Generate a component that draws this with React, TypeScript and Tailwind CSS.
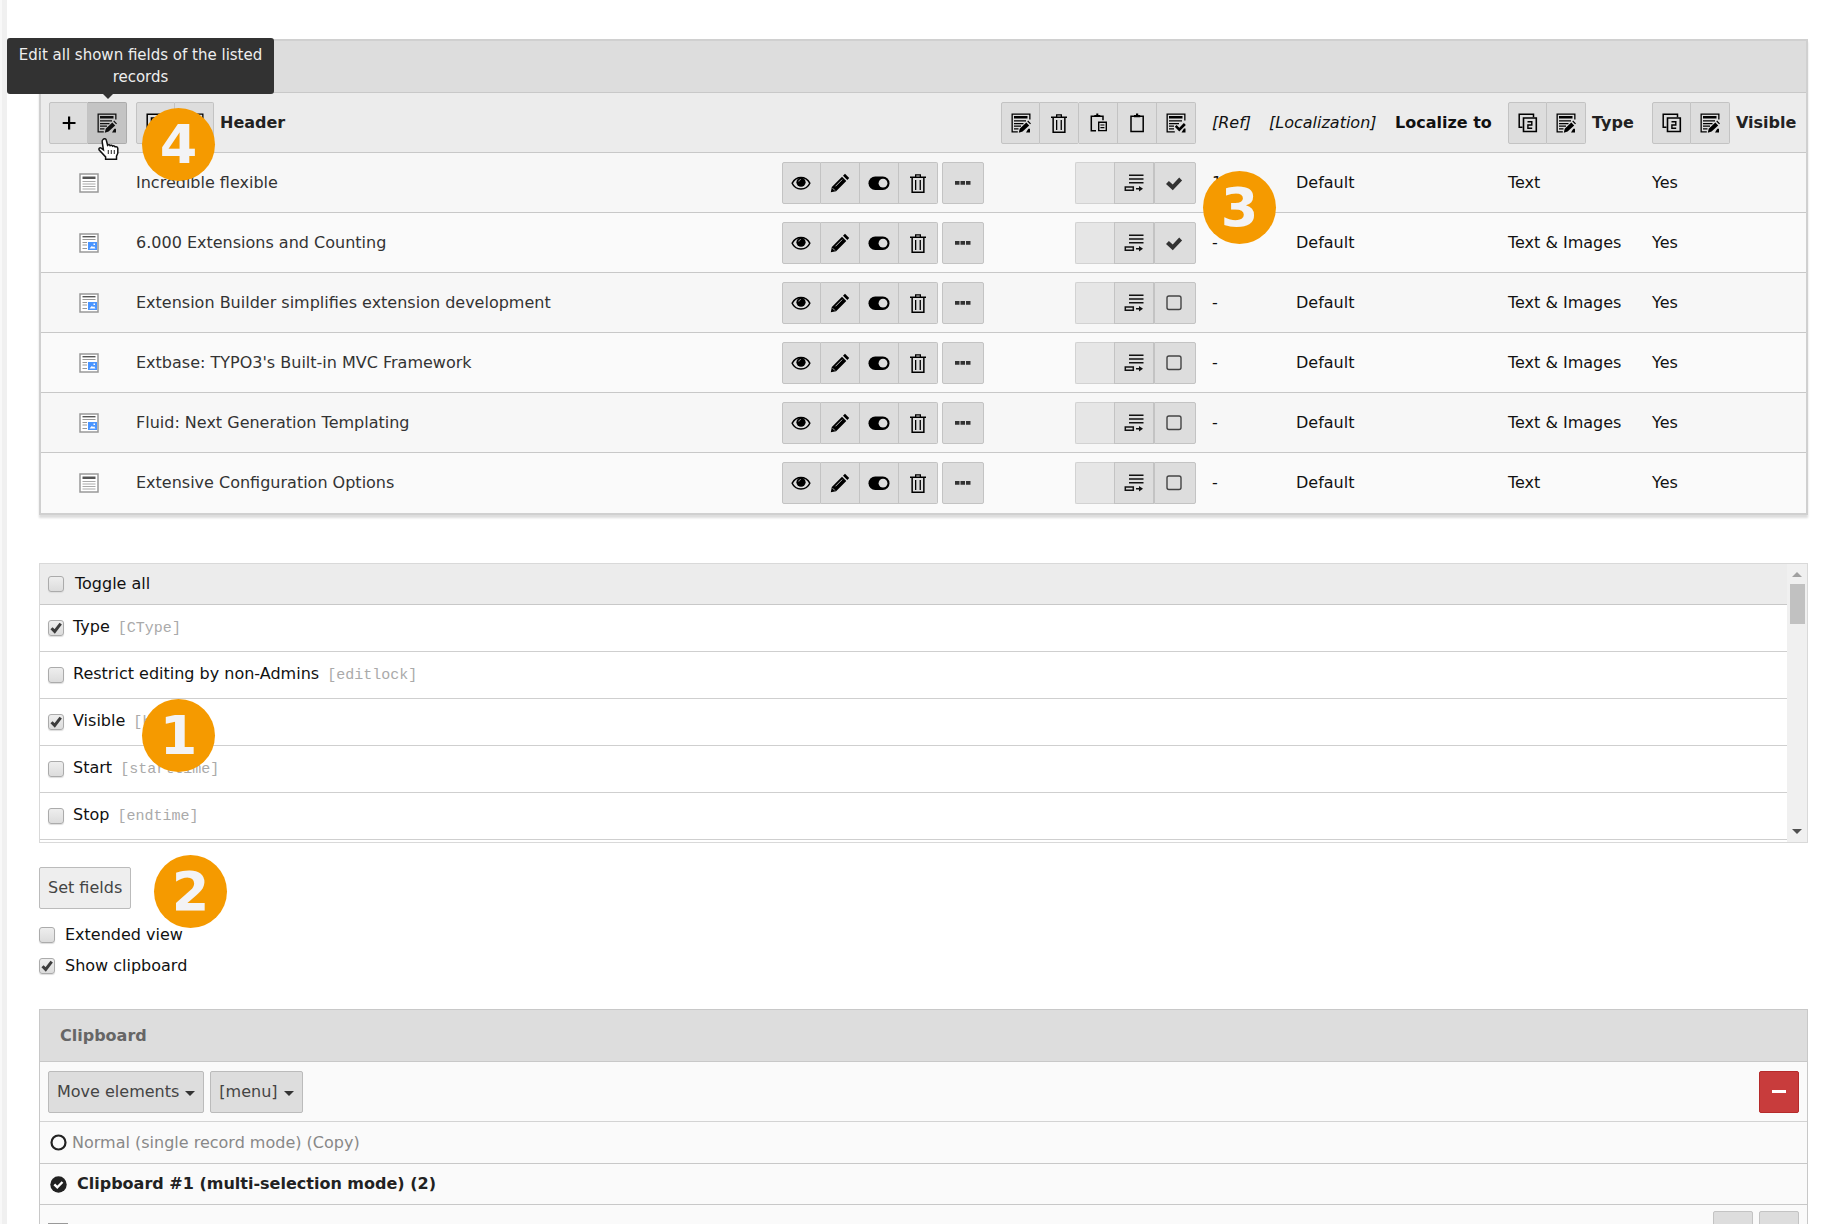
import React from 'react';

const records = [
  { title: 'Incredible flexible', type: 'Text', checked: true, ref: '1' },
  { title: '6.000 Extensions and Counting', type: 'Text & Images', checked: true, ref: '-' },
  { title: 'Extension Builder simplifies extension development', type: 'Text & Images', checked: false, ref: '-' },
  { title: "Extbase: TYPO3's Built-in MVC Framework", type: 'Text & Images', checked: false, ref: '-' },
  { title: 'Fluid: Next Generation Templating', type: 'Text & Images', checked: false, ref: '-' },
  { title: 'Extensive Configuration Options', type: 'Text', checked: false, ref: '-' },
];

const fields = [
  { label: 'Type', name: 'CType', checked: true },
  { label: 'Restrict editing by non-Admins', name: 'editlock', checked: false },
  { label: 'Visible', name: 'hidden', checked: true },
  { label: 'Start', name: 'starttime', checked: false },
  { label: 'Stop', name: 'endtime', checked: false },
];

function Icon({ children }: { children: React.ReactNode }) {
  return (
    <svg width="20" height="20" viewBox="0 0 20 20" fill="currentColor" aria-hidden="true">
      {children}
    </svg>
  );
}

const PlusIcon = () => (
  <Icon>
    <path d="M9 3.5h2.200v5.400h5.300v2.200h-5.300v5.400H9v-5.400H3.700V8.900H9z" />
  </Icon>
);

const EditListIcon = () => (
  <Icon>
    <path d="M.5.5h19v6h-1.300V1.800H1.800v16.400h5v1.300H.5z" />
    <path d="M3 3h13.500v2.500H3zM3 7.200h12v1.300H3zM3 9.900h9.500v1.300H3zM3 12.500h7v1.300H3zM3 15.200h4.500v1.300H3z" />
    <path d="M7.800 19.700l.9-4 6.600-6.200 2.900 2.900-6.600 6.200zM16.300 8.400l.8-.8 2.900 2.900-.9.800zM17.300 15.700h1.700v3.800h-4z" />
  </Icon>
);

const CheckListIcon = () => (
  <Icon>
    <path d="M.5.5h19v7h-1.300V1.800H1.800v16.400h7v1.300H.5z" />
    <path d="M3 3h13.500v2.500H3zM3 7.200h13v1.300H3zM3 9.900h10v1.300H3zM3 12.500h5v1.300H3zM3 15.200h5v1.300H3z" />
    <path d="M8.800 13.800l1.800-1.800 2.700 2.700 4.600-4.700 1.900 1.900-6.500 6.500zM18 15.500h1.500v4h-4z" />
  </Icon>
);

const TrashIcon = () => (
  <Icon>
    <path d="M2 3.500h5V1.200h6v2.300h5v1.600h-1.400V20H3.400V5.100H2zM8.300 3.500h3.400V2.400H8.300zM4.900 5.100v13.500h10.200V5.100z" fillRule="evenodd" />
    <path d="M7 7h1.300v10H7zM11.600 7h1.300v10h-1.300z" />
  </Icon>
);

const PasteIcon = () => (
  <Icon>
    <path d="M8 17.700H3.300V3.300H15v4" fill="none" stroke="currentColor" strokeWidth="1.500" />
    <path d="M6.300 3.800V2h2V.6h2V2h2v1.800zM10 8.500h9v9.800h-9zM11.400 9.900v7h6.200v-7z" fillRule="evenodd" />
    <path d="M12.400 11.400h4v1.200h-4zM12.400 14h4v1.200h-4z" />
  </Icon>
);

const ClipboardIcon = () => (
  <Icon>
    <path d="M4 3.300h12.200v15.200H4z" fill="none" stroke="currentColor" strokeWidth="1.500" />
    <path d="M7 4.200V2h2V.6h2.200V2h2v2.200z" />
  </Icon>
);

const CopyIcon = () => (
  <Icon>
    <path d="M4.500 14.200H1.200V1.200H15.500v3" fill="none" stroke="currentColor" strokeWidth="1.500" />
    <path d="M5.500 5h12.800v13.500H5.500z" fill="none" stroke="currentColor" strokeWidth="1.600" />
    <path d="M9.500 8.800h4.300v3.200H9.900v3.200h4.300" fill="none" stroke="currentColor" strokeWidth="1.400" />
  </Icon>
);

const EyeIcon = () => (
  <Icon>
    <path d="M1.200 10.200C3.400 6.200 6.500 4.600 10 4.600s6.600 1.600 8.800 5.600C17 14.300 13.700 15.900 10 15.900S3 14.300 1.200 10.200z" fill="none" stroke="currentColor" strokeWidth="1.500" />
    <circle cx="10" cy="9.200" r="4.600" />
    <path d="M7.800 8.500c.2-1.200.9-1.800 2-2" fill="none" stroke="#ddd" strokeWidth=".8" />
  </Icon>
);

const PencilIcon = () => (
  <Icon>
    <path d="M.8 19.300l1-5.300L12 3.800l4.300 4.300L6.100 18.300zM13 2.800L15 .8l4.200 4.300-1.900 2z" />
    <path d="M5.500 13.300l6.700-6.700M2.600 15.200l2.300 2.300" stroke="#ddd" strokeWidth=".8" />
  </Icon>
);

const ToggleIcon = () => (
  <svg width="22" height="20" viewBox="0 0 22 20" aria-hidden="true">
    <rect x=".5" y="3.500" width="21" height="13.500" rx="6.700" />
    <circle cx="15" cy="10.200" r="4.400" fill="#ddd" />
  </svg>
);

const DotsIcon = () => (
  <Icon>
    <path d="M2 8h4.500v3.700H2zM7.500 8H12v3.700H7.500zM13 8h4.500v3.700H13z" fill="#333" />
  </Icon>
);

const IndentIcon = () => (
  <Icon>
    <path d="M5 1.500h14.500V3H5zM5 5.300h14.500v1.500H5zM5 9.100h14.500v1.500H5z" />
    <path d="M1.300 14.100h8v3.100h-8z" fill="none" stroke="currentColor" strokeWidth="1.500" />
    <path d="M12 15h3v-2l4 2.700-4 2.700v-2h-3z" />
  </Icon>
);

const CheckIcon = () => (
  <Icon>
    <path d="M1 11l2.900-3 3.800 3.600 6.500-7 2.900 2.800-9.300 9.800z" fill="#333" />
  </Icon>
);

const EmptyBoxIcon = () => (
  <Icon>
    <rect x="2" y="3" width="14" height="13.500" rx="2" fill="none" stroke="#444" strokeWidth="1.400" />
  </Icon>
);

function TextRecordIcon() {
  return (
    <svg width="20" height="20" viewBox="0 0 20 20" aria-hidden="true">
      <rect x="1" y="1" width="18" height="18" fill="#fff" stroke="#999" strokeWidth="1.500" />
      <path d="M3.500 3.500h13v2.500h-13z" fill="#555" />
      <path d="M3.500 8.500h13M3.500 11h13M3.500 13.500h13M3.500 16h13" stroke="#aaa" />
    </svg>
  );
}

function ImageRecordIcon() {
  return (
    <svg width="20" height="20" viewBox="0 0 20 20" aria-hidden="true">
      <rect x="1" y="1" width="18" height="18" fill="#fff" stroke="#999" strokeWidth="1.500" />
      <path d="M3.500 3h13v1.400h-13z" fill="#555" />
      <path d="M3.500 6.500h13M3.500 9.500H8M3.500 12H8M3.500 15.500H8" stroke="#999" />
      <path d="M9 9h9v8H9z" fill="#4a95ff" />
      <path d="M10.500 15.500l2.300-2.500 1.300 1 1-.7 1.400 2.200z" fill="#fff" />
      <path d="M14.500 10.500h1.500v1.500h-1.500z" fill="#fff" />
    </svg>
  );
}

function IconButton({ label, className = '', children }: { label: string; className?: string; children?: React.ReactNode }) {
  return (
    <button
      type="button"
      aria-label={label}
      className={
        'flex h-[42px] w-[39px] items-center justify-center border border-l-0 border-[#c3c3c3] bg-[#ddd] text-black first:rounded-l-xs first:border-l last:rounded-r-xs ' +
        className
      }
    >
      {children}
    </button>
  );
}

function ColumnTools() {
  return (
    <div className="flex">
      <IconButton label="Copy column">
        <CopyIcon />
      </IconButton>
      <IconButton label="Edit column">
        <EditListIcon />
      </IconButton>
    </div>
  );
}

function Checkbox({ checked, id }: { checked?: boolean; id: string }) {
  return (
    <span className="relative inline-flex size-4 shrink-0">
      <input
        id={id}
        type="checkbox"
        defaultChecked={checked}
        className="peer size-4 appearance-none rounded-[3px] border border-[#ababab] bg-linear-to-b from-[#eee] to-[#dcdcdc] shadow-[0_1px_1px_#ddd]"
      />
      <svg viewBox="0 0 16 16" className="pointer-events-none absolute inset-0 hidden peer-checked:block" aria-hidden="true">
        <path d="M3.500 8.200l3.200 3.200 6-7.700" fill="none" stroke="#3c3c3c" strokeWidth="3" />
      </svg>
    </span>
  );
}

function Badge({ n, className }: { n: number; className: string }) {
  return (
    <div
      className={
        'pointer-events-none absolute z-10 flex size-[73px] items-center justify-center rounded-full bg-[#f59a00] text-[54px] leading-none font-bold text-[#f3f3f5] ' +
        className
      }
    >
      {n}
    </div>
  );
}

function HandCursor() {
  return (
    <svg width="23" height="24" viewBox="0 0 23 24" className="pointer-events-none absolute top-[35px] left-[9px] z-10" aria-hidden="true">
      <path
        d="M6 2.500c1.300-1.300 3-.8 3.400 1l1.200 4.800c.8-.8 2-.7 2.500.3.900-.7 2.100-.5 2.500.5.900-.5 2.100-.2 2.500.7 1.400-.5 2.600.2 2.700 1.700v4.700l-1.300 3v3H8.600v-2.300L2 12.800c-.6-1.500.9-2.600 2.200-1.700l2.200 1.700L5.200 5c-.2-.9 0-1.800.8-2.500z"
        fill="#fff"
        stroke="#111"
        strokeWidth="1.500"
      />
      <path d="M11.300 13v4M14.300 13v4M17.300 13v4" stroke="#333" strokeWidth="1.100" />
    </svg>
  );
}

function RecordTable() {
  return (
    <section className="relative border-2 border-[#d0d0d0] shadow-[0_3px_2px_#ddd]">
      <div className="h-[52px] border-b border-[#c8c8c8] bg-[#ddd]" />
      <table className="w-full table-fixed border-separate border-spacing-0 text-left [&_tr:not(:last-child)>td]:border-b [&_td]:border-[#c8c8c8]">
        <colgroup>
          <col className="w-[87px]" />
          <col />
          <col className="w-[218px]" />
          <col className="w-[212px]" />
          <col className="w-[57px]" />
          <col className="w-[126px]" />
          <col className="w-[113px]" />
          <col className="w-36" />
          <col className="w-[162px]" />
        </colgroup>
        <thead>
          <tr className="h-[60px] bg-[#ececec] whitespace-nowrap [&>th]:border-b [&>th]:border-[#c8c8c8]">
            <th className="p-0 pl-2">
              <div className="flex">
                <IconButton label="New record">
                  <PlusIcon />
                </IconButton>
                <div className="relative">
                  <button
                    type="button"
                    aria-label="Edit all shown fields"
                    aria-describedby="edit-tip"
                    className="flex h-[42px] w-[39px] items-center justify-center rounded-r-xs border border-l-0 border-[#acacac] bg-[#c4c4c4]"
                  >
                    <EditListIcon />
                  </button>
                  <div
                    id="edit-tip"
                    role="tooltip"
                    className="absolute -top-16 -left-[81px] z-20 w-[267px] rounded-[3px] bg-[#323232] px-2.5 py-1.5 text-center text-[15px] leading-[22px] font-normal whitespace-normal text-[#eee]"
                  >
                    Edit all shown fields of the listed records
                    <span className="absolute top-full left-[96px] border-x-[5px] border-t-[5px] border-x-transparent border-t-[#323232]" />
                  </div>
                  <HandCursor />
                </div>
              </div>
            </th>
            <th className="px-2 py-0" colSpan={2}>
              <div className="flex items-center gap-1.5">
                <ColumnTools />
                <a href="#header" className="text-[#222]">Header</a>
              </div>
            </th>
            <th className="p-0 pr-2">
              <div className="flex justify-end">
                <IconButton label="Edit marked">
                  <EditListIcon />
                </IconButton>
                <IconButton label="Delete marked" className="rounded-r-xs">
                  <TrashIcon />
                </IconButton>
                <IconButton label="Paste">
                  <PasteIcon />
                </IconButton>
                <IconButton label="Transfer to clipboard">
                  <ClipboardIcon />
                </IconButton>
                <IconButton label="Mark all">
                  <CheckListIcon />
                </IconButton>
              </div>
            </th>
            <th className="px-2 py-0 font-normal italic">[Ref]</th>
            <th className="px-2 py-0 font-normal italic">[Localization]</th>
            <th className="px-2 py-0">Localize to</th>
            <th className="px-2 py-0">
              <div className="flex items-center gap-1.5">
                <ColumnTools />
                <a href="#type" className="text-[#222]">Type</a>
              </div>
            </th>
            <th className="px-2 py-0">
              <div className="flex items-center gap-1.5">
                <ColumnTools />
                <a href="#visible" className="text-[#222]">Visible</a>
              </div>
            </th>
          </tr>
        </thead>
        <tbody>
          {records.map((r) => (
            <tr key={r.title} className="h-[60px] bg-[#fafafa] whitespace-nowrap odd:bg-[#f7f7f7]">
              <td className="p-0 pl-[38px]">{r.type === 'Text' ? <TextRecordIcon /> : <ImageRecordIcon />}</td>
              <td className="px-2 py-0">
                <a href="#record" className="text-[#333]">{r.title}</a>
              </td>
              <td className="px-2 py-0">
                <div className="flex gap-1">
                  <div className="flex">
                    <IconButton label="View"><EyeIcon /></IconButton>
                    <IconButton label="Edit"><PencilIcon /></IconButton>
                    <IconButton label="Hide"><ToggleIcon /></IconButton>
                    <IconButton label="Delete"><TrashIcon /></IconButton>
                  </div>
                  <button
                    type="button"
                    aria-label="More options"
                    className="flex h-[42px] w-[42px] items-center justify-center rounded-xs border border-[#c3c3c3] bg-[#ddd]"
                  >
                    <DotsIcon />
                  </button>
                </div>
              </td>
              <td className="p-0 pr-2">
                <div className="flex justify-end">
                  <span className="h-[42px] w-[39px] rounded-l-xs border border-r-0 border-[#d2d2d2] bg-[#e6e6e6]" />
                  <button
                    type="button"
                    aria-label="Indent"
                    className="flex h-[42px] w-10 items-center justify-center border border-[#c3c3c3] bg-[#ddd]"
                  >
                    <IndentIcon />
                  </button>
                  <button
                    type="button"
                    aria-label="Mark record"
                    aria-pressed={r.checked}
                    className="flex h-[42px] w-[42px] items-center justify-center rounded-r-xs border border-[#c3c3c3] bg-[#ddd]"
                  >
                    {r.checked ? <CheckIcon /> : <EmptyBoxIcon />}
                  </button>
                </div>
              </td>
              <td className="px-2 py-0">{r.ref}</td>
              <td className="p-0 pl-[35px]">Default</td>
              <td className="p-0" />
              <td className="px-2 py-0">{r.type}</td>
              <td className="px-2 py-0">Yes</td>
            </tr>
          ))}
        </tbody>
      </table>
      <Badge n={4} className="top-[67px] left-[101px]" />
      <Badge n={3} className="top-[130px] right-[530px]" />
    </section>
  );
}

function FieldList() {
  return (
    <section className="relative mt-12 flex h-[280px] border border-[#d9d9d9]">
      <div className="min-w-0 flex-1 overflow-hidden">
        <div className="flex h-[41px] items-center gap-[11px] border-b border-[#c8c8c8] bg-[#ececec] px-2">
          <Checkbox id="toggle-all" />
          <label htmlFor="toggle-all">Toggle all</label>
        </div>
        {fields.map((f) => (
          <div key={f.name} className="flex h-[47px] items-center border-b border-[#cfcfcf] px-2">
            <Checkbox id={f.name} checked={f.checked} />
            <label htmlFor={f.name} className="pl-[9px]">
              {f.label} <span className="pl-[3px] font-['Liberation_Mono',monospace] text-[15px] text-[#aaa]">[{f.name}]</span>
            </label>
          </div>
        ))}
      </div>
      <div className="flex w-5 flex-col items-center justify-between bg-[#f0f0f0] pt-2 pb-2" aria-hidden="true">
        <div className="flex flex-col items-center gap-[7px]">
          <span className="border-x-[5px] border-b-[5px] border-x-transparent border-b-[#a0a0a0]" />
          <span className="h-10 w-[15px] bg-[#c1c1c1]" />
        </div>
        <span className="border-x-[5px] border-t-[5px] border-x-transparent border-t-[#505050]" />
      </div>
      <Badge n={1} className="top-[135px] left-[102px]" />
    </section>
  );
}

function Caret() {
  return <span className="mt-1 border-x-[5px] border-t-[5px] border-x-transparent border-t-[#333]" />;
}

function ClipboardPanel() {
  return (
    <section className="mt-[33px] border border-[#c8c8c8] bg-[#fafafa]">
      <h2 className="flex h-[52px] items-center border-b border-[#c8c8c8] bg-[#ddd] px-5 font-bold text-[#666]">Clipboard</h2>
      <div className="flex h-[60px] items-center gap-1.5 border-b border-[#d3d3d3] px-2">
        <button type="button" className="flex h-[42px] items-center gap-1.5 rounded-xs border border-[#bbb] bg-[#ddd] px-2 text-[#444]">
          Move elements <Caret />
        </button>
        <button type="button" className="flex h-[42px] items-center gap-1.5 rounded-xs border border-[#bbb] bg-[#ddd] px-2 text-[#444]">
          [menu] <Caret />
        </button>
        <button
          type="button"
          aria-label="Clear"
          className="ml-auto flex h-[42px] w-10 items-center justify-center rounded-xs border border-[#b52a2a] bg-[#c83c3c]"
        >
          <span className="h-[3px] w-3.5 bg-white" />
        </button>
      </div>
      <div className="flex h-[42px] items-center gap-[5px] border-b border-[#c8c8c8] px-[10px] text-[#888]">
        <svg width="17" height="17" viewBox="0 0 17 17" aria-hidden="true">
          <circle cx="8.500" cy="8.500" r="7" fill="none" stroke="#222" strokeWidth="2.200" />
        </svg>
        <a href="#normal">Normal (single record mode) (Copy)</a>
      </div>
      <div className="flex h-[41px] items-center gap-[10px] border-b border-[#c8c8c8] px-[10px] text-[#222]">
        <svg width="17" height="17" viewBox="0 0 17 17" aria-hidden="true">
          <circle cx="8.500" cy="8.500" r="8.200" fill="#222" />
          <path d="M4.300 8.300l3 3 5.200-5.300" fill="none" stroke="#fff" strokeWidth="2.400" />
        </svg>
        <a href="#clipboard-1" className="font-bold">Clipboard #1 (multi-selection mode) (2)</a>
      </div>
      <div className="flex h-[60px] items-start gap-1.5 px-2 pt-1.5">
        <span className="mt-3 size-5 border-2 border-[#999] bg-white" />
        <button type="button" aria-label="Info" className="ml-auto h-[42px] w-10 rounded-xs border border-[#c3c3c3] bg-[#ddd]" />
        <button type="button" aria-label="Remove" className="h-[42px] w-10 rounded-xs border border-[#c3c3c3] bg-[#ddd]" />
      </div>
    </section>
  );
}

export default function App() {
  return (
    <div className="flex h-screen overflow-hidden bg-white font-['DejaVu_Sans',sans-serif] text-[16px] leading-5 text-[#111]">
      <div className="w-[7px] shrink-0 border-l-2 border-[#f8f8f8] bg-[#f0f0f0]" />
      <main className="min-w-0 flex-1 pt-[39px] pr-[15px] pl-8">
        <RecordTable />
        <FieldList />
        <div className="relative mt-6">
          <button type="button" className="h-[42px] rounded-xs border border-[#bbb] bg-[#eee] px-2 text-[#444]">
            Set fields
          </button>
          <Badge n={2} className="-top-3 left-[115px]" />
        </div>
        <div className="mt-4 flex flex-col gap-[11px]">
          <div className="flex items-center gap-[10px]">
            <Checkbox id="extended" />
            <label htmlFor="extended">Extended view</label>
          </div>
          <div className="flex items-center gap-[10px]">
            <Checkbox id="show-clipboard" checked />
            <label htmlFor="show-clipboard">Show clipboard</label>
          </div>
        </div>
        <ClipboardPanel />
      </main>
    </div>
  );
}
